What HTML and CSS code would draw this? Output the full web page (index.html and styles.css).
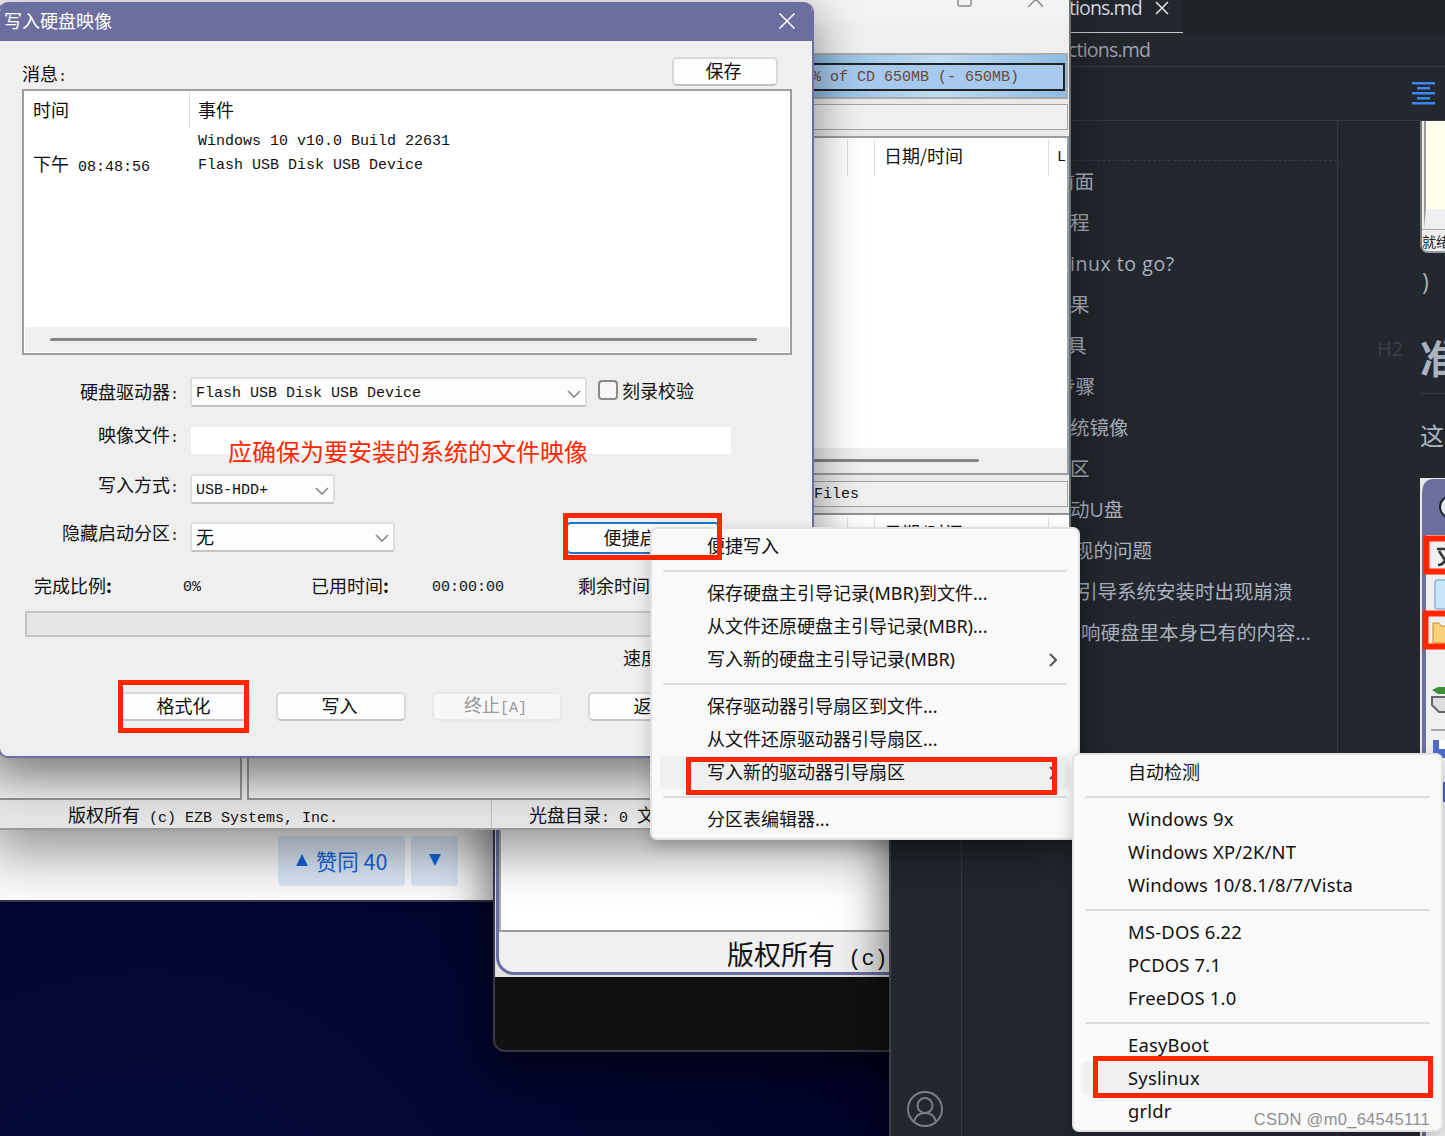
FILE: index.html
```html
<!DOCTYPE html>
<html lang="zh-CN">
<head>
    <meta charset="UTF-8">
    <title>写入硬盘映像</title>
    <link rel="stylesheet" href="styles.css">
</head>
<body>
<div class="desktop">

    <!-- browser page -->
    <div class="window browser">
        <button class="vote"><span class="tri-up"></span>赞同 40</button>
        <button class="vote vote-down"><span class="tri-down"></span></button>
    </div>

    <!-- image viewer -->
    <div class="window viewer">
        <div class="shot">
            <div class="shot-window">
                <div class="shot-list"></div>
                <div class="shot-status">版权所有<span class="mono">&nbsp;(c)</span></div>
            </div>
        </div>
    </div>

    <!-- code editor -->
    <div class="window editor">
        <div class="activity">
            <svg width="38" height="38" viewBox="0 0 38 38" fill="none" stroke="#787d87" stroke-width="2">
                <circle cx="19" cy="19" r="17"/>
                <circle cx="19" cy="15.5" r="7.5"/>
                <path d="M8 31.5c1.500-5.500 5.500-8.500 11-8.500s9.500 3 11 8.500"/>
            </svg>
        </div>
        <div class="editor-main">
            <div class="tabs">
                <div class="tab">tions.md
                    <svg width="14" height="14" viewBox="0 0 14 14" stroke="#e6e6e6" stroke-width="1.500"><path d="M1 1l12 12M13 1L1 13"/></svg>
                </div>
            </div>
            <div class="crumb">ctions.md</div>
            <div class="toolbar">
                <svg width="24" height="24" viewBox="0 0 24 24" fill="#3d87f5"><path d="M0 0h23v2.500H0zM5 5h13v2.500H5zM0 10h23v2.500H0zM5 15h13v2.500H5zM0 20h23v2.500H0z"/></svg>
            </div>
            <div class="editor-body">
                <ul class="toc">
                    <li>前面</li>
                    <li>程</li>
                    <li>inux to go?</li>
                    <li>果</li>
                    <li>具</li>
                    <li>步骤</li>
                    <li>统镜像</li>
                    <li>区</li>
                    <li>动U盘</li>
                    <li>现的问题</li>
                    <li>引导系统安装时出现崩溃</li>
                    <li>响硬盘里本身已有的内容...</li>
                </ul>
                <div class="preview">
                    <div class="pic-one">
                        <div class="pic-page"></div>
                        <div class="pic-status">就绪</div>
                    </div>
                    <p class="paren">)</p>
                    <h2><span class="h2-mark">H2</span>准</h2>
                    <p class="para">这里</p>
                    <div class="pic-two">
                        <svg width="25" height="658" viewBox="0 0 25 658">
                            <rect width="25" height="658" fill="#e6e6e6"/>
                            <path d="M2 658V16Q2 1 14 1H25V658z" fill="#6b6e9e"/>
                            <rect x="6" y="57" width="19" height="601" fill="#efefef"/>
                            <circle cx="31" cy="29" r="11" fill="#dce8f4" stroke="#222" stroke-width="2"/>
                            <path d="M17 71h8M18 87q5 0 7-5M19 73l6 9" stroke="#333" stroke-width="2.500" fill="none"/>
                            <path d="M28 60.500H6.500v33H28" fill="none" stroke="#ff2600" stroke-width="6"/>
                            <rect x="15" y="102" width="14" height="29" rx="2" fill="#c8e6f8" stroke="#5f9ccc"/>
                            <path d="M13 165v-20h6l2 3h6v17z" fill="#fbd27a" stroke="#c98a2c"/>
                            <path d="M28 135.500H5.500v33H28" fill="none" stroke="#ff2600" stroke-width="6"/>
                            <path d="M12 212l6-3h10v7H18z" fill="#3d8f3a"/>
                            <path d="M25 219H12v8l7 7h6" fill="#ddd" stroke="#666" stroke-width="2"/>
                            <path d="M11 252h14" stroke="#aaa" stroke-width="2"/>
                            <path d="M13 262h12v18H13z" fill="#4f6bd0"/>
                            <path d="M19 262h6v9h-6z" fill="#fff"/>
                            <path d="M23 304h2v20h-2z" fill="#4f5fc4"/>
                        </svg>
                    </div>
                </div>
            </div>
        </div>
    </div>

    <!-- UltraISO main window -->
    <div class="window main">
        <div class="main-title">
            <svg width="86" height="8" viewBox="0 0 86 8" fill="none" stroke="#8c8c8c" stroke-width="1.500"><path d="M1 0v4.500q0 1.500 1.500 1.500h10q1.500 0 1.500-1.500V0M71 7l8-8l7 8"/></svg>
        </div>
        <div class="main-menu"></div>
        <div class="capacity"><div class="mono">% of CD 650MB (- 650MB)</div></div>
        <div class="path"></div>
        <div class="files">
            <div class="files-head"><span></span><span></span><span>日期/时间</span><span class="mono">L</span></div>
            <div class="files-scroll"><i></i></div>
        </div>
        <div class="path mono">Files</div>
        <div class="panes">
            <div class="pane pane-left"></div>
            <div class="pane files-head"><span></span><span></span><span>日期/时间</span><span></span></div>
        </div>
        <div class="status">
            <div>版权所有<span class="mono">&nbsp;(c) EZB Systems, Inc.</span></div>
            <div>光盘目录<span class="mono">: 0&nbsp;</span>文件</div>
        </div>
    </div>

    <!-- write disk image dialog -->
    <div class="window dialog">
        <div class="dialog-title">写入硬盘映像
            <svg width="16" height="16" viewBox="0 0 16 16" stroke="#fff" stroke-width="1.500"><path d="M.5.5l15 15M15.500.5l-15 15"/></svg>
        </div>
        <div class="dialog-body">
            <div class="message-row"><span>消息<span class="mono">:</span></span><button class="btn btn-save">保存</button></div>
            <div class="log">
                <div class="log-head"><span>时间</span><span>事件</span></div>
                <div class="log-row"><span></span><span class="mono">Windows 10 v10.0 Build 22631</span></div>
                <div class="log-row"><span>下午<span class="mono">&nbsp;08:48:56</span></span><span class="mono">Flash USB Disk USB Device</span></div>
                <div class="log-scroll"><i></i></div>
            </div>
            <div class="form-row drive">
                <label>硬盘驱动器<span class="mono">:</span></label>
                <div class="combo mono">Flash USB Disk USB Device<svg class="chev" width="14" height="8" viewBox="0 0 14 8"><path d="M1 1l6 6 6-6"/></svg></div>
                <span class="check"></span>刻录校验
            </div>
            <div class="form-row image">
                <label>映像文件<span class="mono">:</span></label>
                <div class="field"></div>
            </div>
            <div class="form-row method">
                <label>写入方式<span class="mono">:</span></label>
                <div class="combo mono">USB-HDD+<svg class="chev" width="14" height="8" viewBox="0 0 14 8"><path d="M1 1l6 6 6-6"/></svg></div>
            </div>
            <div class="form-row hidden-part">
                <label>隐藏启动分区<span class="mono">:</span></label>
                <div class="combo combo-cjk">无<svg class="chev" width="14" height="8" viewBox="0 0 14 8"><path d="M1 1l6 6 6-6"/></svg></div>
                <button class="btn btn-boot">便捷启动</button>
            </div>
            <div class="stats">
                <span>完成比例<b>:</b></span><span class="mono">0%</span><span>已用时间<b>:</b></span><span class="mono">00:00:00</span><span>剩余时间<b>:</b></span>
            </div>
            <div class="progress"></div>
            <div class="speed">速度<b>:</b></div>
            <div class="buttons">
                <button class="btn">格式化</button>
                <button class="btn">写入</button>
                <button class="btn" disabled>终止<span class="mono">[A]</span></button>
                <button class="btn">返回</button>
            </div>
        </div>
    </div>

    <!-- context menus -->
    <ul class="menu boot-menu">
        <li>便捷写入</li>
        <li class="sep"></li>
        <li>保存硬盘主引导记录(MBR)到文件...</li>
        <li>从文件还原硬盘主引导记录(MBR)...</li>
        <li>写入新的硬盘主引导记录(MBR)<svg width="8" height="14" viewBox="0 0 8 14"><path d="M1 1l6 6-6 6"/></svg></li>
        <li class="sep"></li>
        <li>保存驱动器引导扇区到文件...</li>
        <li>从文件还原驱动器引导扇区...</li>
        <li class="active">写入新的驱动器引导扇区<svg width="8" height="14" viewBox="0 0 8 14"><path d="M1 1l6 6-6 6"/></svg></li>
        <li class="sep"></li>
        <li>分区表编辑器...</li>
    </ul>
    <ul class="menu sector-menu">
        <li class="cjk">自动检测</li>
        <li class="sep"></li>
        <li>Windows 9x</li>
        <li>Windows XP/2K/NT</li>
        <li>Windows 10/8.1/8/7/Vista</li>
        <li class="sep"></li>
        <li>MS-DOS 6.22</li>
        <li>PCDOS 7.1</li>
        <li>FreeDOS 1.0</li>
        <li class="sep"></li>
        <li>EasyBoot</li>
        <li class="active">Syslinux</li>
        <li>grldr</li>
    </ul>

    <!-- annotations -->
    <div class="note">应确保为要安装的系统的文件映像</div>
    <div class="mark mark-format"></div>
    <div class="mark mark-boot"></div>
    <div class="mark mark-sector"></div>
    <div class="mark mark-syslinux"></div>
    <div class="watermark">CSDN @m0_64545111</div>
</div>
</body>
</html>
```
FILE: styles.css
```css
* {
    box-sizing: border-box;
}
body {
    margin: 0;
    font-family: "Noto Sans CJK SC", sans-serif;
    font-size: 18px;
    color: #111;
}
ul, p, h2 {
    margin: 0;
    padding: 0;
    list-style: none;
}
svg {
    display: block;
    flex: none;
}
button {
    font: inherit;
    color: inherit;
}
.mono {
    font-family: "Liberation Mono", "Noto Sans CJK SC", monospace;
    font-size: 15px;
    white-space: pre;
}
.desktop {
    position: relative;
    width: 1445px;
    height: 1136px;
    overflow: hidden;
    white-space: nowrap;
    background: radial-gradient(circle at 10% 115%, #030a3c, #02042a 35%, #000120 70%);
}
.window {
    position: absolute;
    overflow: hidden;
}

/* browser */
.browser {
    left: 0;
    top: 800px;
    width: 495px;
    height: 102px;
    display: flex;
    gap: 6px;
    padding: 36px 0 0 278px;
    background: #fbfbfb;
    border-bottom: 2px solid #30363f;
}
.vote {
    display: flex;
    align-items: center;
    justify-content: center;
    gap: 8px;
    width: 127px;
    height: 50px;
    padding: 0 0 2px;
    border: 0;
    border-radius: 4px;
    background: #dbe7f7;
    color: #1568dd;
    font-size: 21.5px;
}
.vote-down {
    width: 47px;
}
.tri-up, .tri-down {
    border: 6.5px solid transparent;
}
.tri-up {
    border-top: 0;
    border-bottom: 12px solid #1568dd;
}
.tri-down {
    border-bottom: 0;
    border-top: 12px solid #1568dd;
}

/* image viewer */
.viewer {
    left: 493px;
    top: 780px;
    width: 420px;
    height: 272px;
    background: #111;
    border: 2px solid #363845;
    border-radius: 0 0 0 12px;
    box-shadow: 0 12px 40px 8px rgba(0, 0, 0, .5);
}
.shot {
    height: 195px;
    background: #e4e4e4;
}
.shot-window {
    height: 193px;
    margin-left: 1px;
    display: flex;
    flex-direction: column;
    background: #efefef;
    border: 3px solid #6b6e9e;
    border-top: 0;
    border-radius: 0 0 0 18px;
    overflow: hidden;
}
.shot-list {
    flex: none;
    height: 150px;
    background: #fff;
    border-bottom: 2px solid #999;
    border-left: 2px solid #aaa;
}
.shot-status {
    padding-left: 228px;
    font-size: 27px;
    line-height: 44px;
}
.shot-status .mono {
    font-size: 22px;
}

/* editor */
.editor {
    left: 889px;
    top: 0;
    width: 556px;
    height: 1136px;
    display: flex;
    background: #23272e;
    border-left: 2px solid #3a3f46;
    color: #abb2bf;
    font-family: "Open Sans", "Noto Sans CJK SC", sans-serif;
    box-shadow: 0 0 40px 6px rgba(0, 0, 0, .5);
}
.activity {
    width: 71px;
    border-right: 1px solid #363a41;
    display: flex;
    align-items: flex-end;
    padding: 0 0 8px 15px;
}
.editor-main {
    flex: 1;
}
.tabs {
    height: 33px;
    background: #1e2227;
}
.tab {
    display: flex;
    align-items: center;
    justify-content: space-between;
    width: 221px;
    height: 33px;
    padding: 0 14px 17px 107px;
    background: #23272e;
    border-bottom: 1px solid #c8c8c8;
    color: #d7dae0;
    font-size: 19.5px;
    letter-spacing: -.9px;
}
.crumb {
    height: 34px;
    padding-left: 106px;
    border-bottom: 1px solid #363a41;
    line-height: 33px;
    font-size: 19.5px;
    letter-spacing: -.8px;
    color: #9da3ae;
}
.toolbar {
    display: flex;
    justify-content: flex-end;
    height: 54px;
    padding: 15px 9px 0 0;
    border-bottom: 1px solid #363a41;
}
.editor-body {
    display: flex;
    height: 1015px;
}
.toc {
    width: 376px;
    padding-top: 39px;
    border-right: 1px solid #363a41;
    font-size: 19.5px;
}
.toc li {
    height: 41px;
    padding-left: 108px;
    line-height: 41px;
}
.toc li:first-child {
    height: 42px;
    padding-left: 93px;
    border-top: 1px dashed #3b3f46;
}
.toc li:nth-child(3) { letter-spacing: .55px; }
.toc li:nth-child(5) { padding-left: 105px; }
.toc li:nth-child(6) { padding-left: 94px; }
.toc li:nth-child(10) { padding-left: 112px; }
.toc li:nth-child(11) { padding-left: 116px; }
.toc li:nth-child(12) { padding-left: 119px; }
.preview {
    width: 107px;
    padding-left: 82px;
    overflow: hidden;
}
.pic-one {
    height: 132px;
    padding-left: 2px;
    background: #efefef;
    border-left: 2px solid #777;
    border-bottom: 2px solid #999;
    border-radius: 0 0 0 8px;
    color: #222;
}
.pic-page {
    height: 108px;
    background: #ffffee;
    border-left: 2px solid #999;
    border-bottom: 20px solid #efefef;
}
.pic-status {
    margin-left: -2px;
    border-top: 1px solid #aaa;
    font-size: 14px;
    line-height: 24px;
}
.paren {
    padding-left: 2px;
    font-size: 23px;
    line-height: 56px;
    height: 58px;
}
.preview h2 {
    display: flex;
    height: 82px;
    margin-left: -43px;
    font-size: 39px;
    line-height: 94px;
}
.h2-mark {
    flex: none;
    width: 43px;
    font-size: 20px;
    font-weight: 400;
    line-height: 76px;
    color: #3c4047;
}
.para {
    height: 85px;
    border-top: 1px solid #363a41;
    font-size: 24px;
    line-height: 84px;
}

/* main window */
.main {
    left: -10px;
    top: 0;
    width: 1081px;
    height: 830px;
    padding-left: 10px;
    background: #e9e9e9;
    border-right: 2px solid #6b7070;
    border-bottom: 2px solid #999;
    box-shadow: 0 22px 50px rgba(0, 0, 0, .42);
}
.main-title {
    height: 23px;
    padding-left: 957px;
    background: #f3f3f3;
}
.main-menu {
    height: 30px;
    background: #efefef;
}
.capacity {
    height: 46px;
    margin-right: 1px;
    padding: 8px 1px;
    border: 2px solid #aaa;
    background: linear-gradient(90deg, #86b5de 75%, #c0dcf2 88%, #8fbce3);
}
.capacity div {
    height: 28px;
    padding-left: 807px;
    border: 2px solid #222;
    background: #a5caee;
    color: #6e472c;
    line-height: 25px;
    font-size: 15px;
}
.path {
    height: 26px;
    margin: 5px 1px 6px 0;
    border: 1.5px solid #a4a4a4;
    background: #efefef;
    line-height: 25px;
    padding-left: 813px;
}
.files {
    display: flex;
    flex-direction: column;
    justify-content: space-between;
    height: 339px;
    background: #fff;
    border: 2px solid #9a9fa4;
}
.files-head {
    display: flex;
    height: 40px;
    padding: 2px 0 2px 819px;
    line-height: 31px;
}
.files-head span {
    flex: none;
    width: 27px;
    height: 36px;
    border-right: 1px solid #ddd;
}
.files-head span:nth-child(3) {
    width: 174px;
    padding-left: 9px;
}
.files-head span:nth-child(4) {
    border: 0;
    padding-left: 8px;
    line-height: 35px;
}
.files-scroll {
    height: 25px;
    padding-top: 11px;
    background: #efefef;
}
.files-scroll i, .log-scroll i {
    display: block;
    width: 977px;
    height: 3px;
    border-radius: 2px;
    background: #868686;
}
.main .files + .path {
    margin-top: 6px;
    margin-bottom: 6px;
}
.panes {
    display: flex;
    gap: 5px;
    height: 287px;
}
.pane {
    flex: 1;
    height: 287px;
    background: linear-gradient(#fff 80%, #cfcfcf 84%, #ececec);
    border: 2px solid #8f9396;
}
.panes .pane-left {
    flex: none;
    width: 242px;
    padding: 0;
    border-left: 0;
}
.panes .files-head {
    padding-left: 572px;
}
.status {
    display: flex;
    height: 28px;
    background: #e4e4e4;
    line-height: 29px;
}
.status div {
    width: 492px;
    padding-left: 68px;
    border-right: 1px solid #bbb;
}
.status div + div {
    padding-left: 37px;
}

/* dialog */
.dialog {
    left: -2px;
    top: 2px;
    width: 816px;
    height: 756px;
    background: #efefef;
    border: 2px solid #6b6e9e;
    border-top: 0;
    border-radius: 10px;
    box-shadow: 0 14px 45px 4px rgba(0, 0, 0, .4);
}
.dialog-title {
    display: flex;
    align-items: center;
    justify-content: space-between;
    height: 39px;
    padding: 0 17px 3px 4px;
    background: #6b6e9e;
    color: #fff;
}
.dialog-title svg {
    margin-top: 2px;
}
.dialog-body {
    padding-top: 16px;
}
.message-row {
    display: flex;
    justify-content: space-between;
    height: 32px;
    padding: 0 34px 0 22px;
    line-height: 33px;
}
.btn {
    width: 130px;
    height: 29px;
    padding: 0 3px 0 0;
    background: #fdfdfd;
    border: 2px solid #d9d9d9;
    border-bottom-color: #c4c4c4;
    border-radius: 5px;
    line-height: 20px;
}
.btn:not(.btn-boot) {
    padding-bottom: 4px;
}
.btn-save {
    width: 106px;
}
.log {
    display: flex;
    flex-direction: column;
    width: 770px;
    height: 266px;
    margin-left: 22px;
    padding: 1px;
    background: #fff;
    border: 2px solid #9a9fa4;
}
.log-head, .log-row {
    display: flex;
    height: 24px;
    line-height: 22px;
}
.log-row > .mono {
    line-height: 27px;
}
.log-head {
    height: 36px;
    line-height: 34px;
}
.log-head span:first-child, .log-row > span:first-child {
    width: 165px;
    padding-left: 8px;
}
.log-head span:first-child {
    border-right: 1px solid #ddd;
}
.log-head span:last-child, .log-row > span:last-child {
    padding-left: 8px;
}
.log-scroll {
    height: 25px;
    margin-top: auto;
    padding: 11px 25px;
    background: #efefef;
}
.log-scroll i {
    width: 707px;
}
.form-row {
    display: flex;
    height: 30px;
}
.form-row label {
    width: 190px;
    padding-right: 11px;
    text-align: right;
    line-height: 28px;
}
.drive {
    margin-top: 22px;
    line-height: 26px;
}
.image {
    margin-top: 20px;
}
.image label {
    margin-top: -7px;
}
.method {
    margin-top: 17px;
}
.method label, .hidden-part label {
    margin-top: -4px;
}
.hidden-part {
    margin-top: 18px;
}
.combo {
    display: flex;
    align-items: center;
    justify-content: space-between;
    height: 30px;
    padding: 3px 4px 0 4px;
    background: #fdfdfd;
    border: 2px solid #dedede;
    border-bottom-color: #c4c4c4;
    border-radius: 3px;
}
.combo-cjk {
    padding: 0 4px 2px;
}
.combo-cjk svg {
    margin-top: 4px;
}
.chev {
    fill: none;
    stroke: #8a8a8a;
    stroke-width: 1.7;
}
.drive .combo { width: 397px; }
.method .combo { width: 145px; }
.hidden-part .combo { width: 205px; }
.check {
    width: 20px;
    height: 20px;
    margin: 3px 4px 0 11px;
    background: #f6f6f6;
    border: 2px solid #8a8a8a;
    border-radius: 4px;
}
.field {
    width: 540px;
    height: 27px;
    margin-left: 1px;
    background: #fff;
}
.btn-boot {
    width: 154px;
    height: 32px;
    margin-left: 171px;
    padding: 0 7px 2px 0;
    border-color: #1a78c8;
}
.stats {
    display: flex;
    height: 30px;
    margin-top: 19px;
    padding-left: 34px;
    line-height: 28px;
}
.stats .mono {
    line-height: 33px;
}
.stats span:nth-child(1) { width: 149px; }
.stats span:nth-child(2) { width: 128px; }
.stats span:nth-child(3) { width: 121px; }
.stats span:nth-child(4) { width: 146px; }
.progress {
    width: 765px;
    height: 26px;
    margin: 10px 0 0 25px;
    background: #e5e5e5;
    border: 2px solid #c4c4c4;
}
.speed {
    height: 30px;
    margin: 6px 0 19px 623px;
    line-height: 29px;
}
.buttons {
    display: flex;
    gap: 26px;
    padding-left: 120px;
}
.btn:disabled {
    border-color: #e8e8e8;
    background: #f7f7f7;
    color: #999;
}

/* menus */
.menu {
    position: absolute;
    padding: 1px 8px;
    background: #f9f9f9;
    border: 2px solid #e2e2e2;
    border-radius: 7px;
    box-shadow: 0 6px 16px rgba(0, 0, 0, .2);
    font-family: "Noto Sans", "Noto Sans CJK SC", sans-serif;
}
.menu li {
    display: flex;
    align-items: center;
    justify-content: space-between;
    height: 33px;
    padding: 0 13px 3px 47px;
    border-radius: 5px;
}
.menu .sep {
    height: 1.5px;
    margin: 7px 3px 5.5px;
    padding: 0;
    background: #dcdcdc;
}
.menu .active {
    background: #f0f0f0;
}
.menu svg {
    margin-top: 3px;
    fill: none;
    stroke: #555;
    stroke-width: 2;
}
.boot-menu {
    left: 650px;
    top: 527px;
    width: 430px;
    height: 313px;
}
.sector-menu {
    left: 1072px;
    top: 753px;
    width: 371px;
    height: 379px;
}
.sector-menu li {
    padding-left: 46px;
    font-size: 18.4px;
    letter-spacing: .2px;
}
.sector-menu .cjk {
    font-size: 18px;
    letter-spacing: 0;
}

/* annotations */
.note {
    position: absolute;
    left: 228px;
    top: 433px;
    line-height: 36px;
    font-size: 24px;
    color: #ff2600;
}
.mark {
    position: absolute;
    border: 5px solid #ff2600;
}
.mark-format {
    left: 118px;
    top: 680px;
    width: 131px;
    height: 53px;
}
.mark-boot {
    left: 563px;
    top: 513px;
    width: 159px;
    height: 47px;
}
.mark-sector {
    left: 686px;
    top: 757px;
    width: 371px;
    height: 38px;
}
.mark-syslinux {
    left: 1093px;
    top: 1056px;
    width: 340px;
    height: 42px;
}
.watermark {
    position: absolute;
    right: 15px;
    top: 1109px;
    font-family: "Liberation Sans", sans-serif;
    font-size: 16.5px;
    letter-spacing: .3px;
    line-height: 20px;
    color: #8f8f8f;
}
```
